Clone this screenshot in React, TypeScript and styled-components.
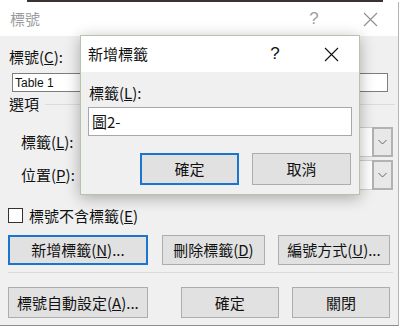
import React from "react";
import styled, { createGlobalStyle } from "styled-components";

const Global = createGlobalStyle`
  html, body { margin: 0; padding: 0; background: #fff; }
  body {
    width: 403px; height: 332px; overflow: hidden;
    font-family: "Noto Sans CJK TC", "Noto Sans", sans-serif;
    color: #111;
  }
  * { box-sizing: border-box; }
`;

const Page = styled.div`
  position: relative;
  width: 403px;
  height: 332px;
  overflow: hidden;
  background: #fff;
  display: flex;
  flex-direction: column;
`;

const TopBand = styled.div`
  flex: none;
  height: 2px;
  margin-left: 27px;
  width: 356px;
  background: #3b3232;
`;

const Outer = styled.div`
  flex: none;
  width: 399px;
  height: 324px;
  border-right: 1px solid #b4b4b4;
  border-bottom: 1px solid #8c8c8c;
  display: flex;
  flex-direction: column;
`;

const TitleBar = styled.div<{ $h: number; $pl: number }>`
  flex: none;
  height: ${(p) => p.$h}px;
  background: #fff;
  display: flex;
  align-items: center;
  padding-left: ${(p) => p.$pl}px;
`;

const TitleText = styled.span<{ $dim?: boolean }>`
  font-size: 15px;
  line-height: 20px;
  color: ${(p) => (p.$dim ? "#9c9c9c" : "#111")};
`;

const CaptionButton = styled.div<{ $dim?: boolean }>`
  width: 56px;
  height: 100%;
  display: flex;
  align-items: center;
  justify-content: center;
  font-family: "Liberation Sans", sans-serif;
  font-size: 17px;
  color: ${(p) => (p.$dim ? "#a0a0a0" : "#111")};
`;

const Spacer = styled.div`
  flex: 1;
`;

const Body = styled.div<{ $pt: number }>`
  flex: 1;
  background: #f0f0f0;
  padding-top: ${(p) => p.$pt}px;
  display: flex;
  flex-direction: column;
`;

const Label = styled.div<{ $ml: number }>`
  flex: none;
  margin-left: ${(p) => p.$ml}px;
  height: 20px;
  font-size: 15px;
  line-height: 20px;
  white-space: nowrap;
`;

const TextInput = styled.div`
  flex: none;
  margin: 6px 0 0 12px;
  width: 376px;
  height: 19px;
  border: 1px solid #7d7d7d;
  background: #fff;
  display: flex;
  align-items: center;
  padding-left: 2px;
  font-family: "Liberation Sans", sans-serif;
  font-size: 12px;
  color: #111;
`;

const GroupHeader = styled.div`
  flex: none;
  margin-top: 2px;
  height: 20px;
  display: flex;
  align-items: center;
  padding-left: 9px;
  padding-right: 3px;
  font-size: 15px;
  line-height: 20px;
`;

const GroupLine = styled.div`
  flex: 1;
  height: 1px;
  margin-left: 6px;
  background: #dcdcdc;
`;

const FieldRow = styled.div<{ $mt: number }>`
  flex: none;
  margin-top: ${(p) => p.$mt}px;
  height: 30px;
  display: flex;
  align-items: center;
  padding-left: 21px;
  padding-right: 5px;
  font-size: 15px;
  line-height: 20px;
`;

const Combo = styled.div`
  margin-left: auto;
  width: 293px;
  height: 30px;
  background: #fff;
  border: 1px solid #cfcfcf;
  display: flex;
  justify-content: flex-end;
`;

const ComboButton = styled.div`
  width: 21px;
  height: 30px;
  margin: -1px -1px -1px 0;
  border: 2px solid #b2b2b2;
  background: #e8e8e8;
  display: flex;
  align-items: center;
  justify-content: center;
`;

const CheckRow = styled.div`
  flex: none;
  margin-top: 18px;
  height: 15px;
  display: flex;
  align-items: center;
  gap: 6px;
  padding-left: 8px;
  font-size: 15px;
  line-height: 20px;
`;

const CheckBox = styled.div`
  width: 15px;
  height: 15px;
  background: #fff;
  border: 1px solid #333;
`;

const CheckLabel = styled.span`
  white-space: nowrap;
`;

const ButtonRow = styled.div<{ $mt: number; $h: number; $pl: number; $end?: boolean }>`
  flex: none;
  margin-top: ${(p) => p.$mt}px;
  height: ${(p) => p.$h}px;
  display: flex;
  justify-content: ${(p) => (p.$end ? "flex-end" : "flex-start")};
  padding-left: ${(p) => p.$pl}px;
  padding-right: 8px;
`;

const Button = styled.div<{ $w: number; $ml?: number; $focus?: boolean }>`
  width: ${(p) => p.$w}px;
  height: 100%;
  margin-left: ${(p) => p.$ml ?? 0}px;
  background: #e1e1e1;
  border: ${(p) => (p.$focus ? "2px solid #1a75cc" : "1px solid #adadad")};
  display: flex;
  align-items: center;
  justify-content: center;
  font-size: 15px;
  line-height: 20px;
  color: #111;
  white-space: nowrap;
`;

const Separator = styled.div`
  flex: none;
  margin: 7px 5px 0 8px;
  height: 1px;
  background: #dadada;
`;

const BottomStrip = styled.div`
  flex: none;
  height: 7px;
  background: #fff;
`;

const Inner = styled.div`
  position: absolute;
  left: 80px;
  top: 35px;
  width: 280px;
  height: 160px;
  border: 1px solid #b6c4ab;
  box-shadow: 0 3px 14px rgba(0, 0, 0, 0.3);
  display: flex;
  flex-direction: column;
  background: #f0f0f0;
`;

const InnerBody = styled.div`
  flex: 1;
  background: #f0f0f0;
  padding: 11px 0 0 7px;
  display: flex;
  flex-direction: column;
`;

const InnerInput = styled.div`
  flex: none;
  margin-top: 4px;
  width: 264px;
  height: 29px;
  background: #fff;
  border: 1px solid #a8a8a8;
  display: flex;
  align-items: center;
  padding-left: 3px;
  font-size: 15px;
  line-height: 20px;
  color: #111;
`;

const Close = ({ color }: { color: string }) => (
  <svg width="15" height="15" viewBox="0 0 15 15">
    <path d="M1 1 L14 14 M14 1 L1 14" stroke={color} strokeWidth="1.1" fill="none" />
  </svg>
);

const Chevron = () => (
  <svg width="9" height="6" viewBox="0 0 9 6">
    <path d="M0.5 1 L4.5 5 L8.5 1" stroke="#666" strokeWidth="1" fill="none" />
  </svg>
);

export default function App() {
  return (
    <Page>
      <Global />
      <TopBand />
      <Outer>
        <TitleBar $h={34} $pl={10}>
          <TitleText $dim>標號</TitleText>
          <Spacer />
          <CaptionButton $dim>?</CaptionButton>
          <CaptionButton $dim>
            <Close color="#8e8e8e" />
          </CaptionButton>
        </TitleBar>
        <Body $pt={11}>
          <Label $ml={9}>
            標號(<u>C</u>):
          </Label>
          <TextInput>Table 1</TextInput>
          <GroupHeader>
            選項
            <GroupLine />
          </GroupHeader>
          <FieldRow $mt={13}>
            標籤(<u>L</u>):
            <Combo>
              <ComboButton>
                <Chevron />
              </ComboButton>
            </Combo>
          </FieldRow>
          <FieldRow $mt={3}>
            位置(<u>P</u>):
            <Combo>
              <ComboButton>
                <Chevron />
              </ComboButton>
            </Combo>
          </FieldRow>
          <CheckRow>
            <CheckBox />
            <CheckLabel>
              標號不含標籤(<u>E</u>)
            </CheckLabel>
          </CheckRow>
          <ButtonRow $mt={12} $h={30} $pl={8}>
            <Button $w={141} $focus>
              新增標籤(<u>N</u>)...
            </Button>
            <Button $w={104} $ml={14}>
              刪除標籤(<u>D</u>)
            </Button>
            <Button $w={113} $ml={13}>
              編號方式(<u>U</u>)...
            </Button>
          </ButtonRow>
          <Separator />
          <ButtonRow $mt={14} $h={31} $pl={8}>
            <Button $w={141}>
              標號自動設定(<u>A</u>)...
            </Button>
            <Button $w={99} $ml={33}>
              確定
            </Button>
            <Button $w={99} $ml={13}>
              關閉
            </Button>
          </ButtonRow>
        </Body>
      </Outer>
      <BottomStrip />

      <Inner>
        <TitleBar $h={36} $pl={7}>
          <TitleText>新增標籤</TitleText>
          <Spacer />
          <CaptionButton>?</CaptionButton>
          <CaptionButton>
            <Close color="#111" />
          </CaptionButton>
        </TitleBar>
        <InnerBody>
          <Label $ml={1}>
            標籤(<u>L</u>):
          </Label>
          <InnerInput>圖2-</InnerInput>
          <ButtonRow $mt={17} $h={32} $pl={0} $end>
            <Button $w={99} $focus>
              確定
            </Button>
            <Button $w={99} $ml={13}>
              取消
            </Button>
          </ButtonRow>
        </InnerBody>
      </Inner>
    </Page>
  );
}
